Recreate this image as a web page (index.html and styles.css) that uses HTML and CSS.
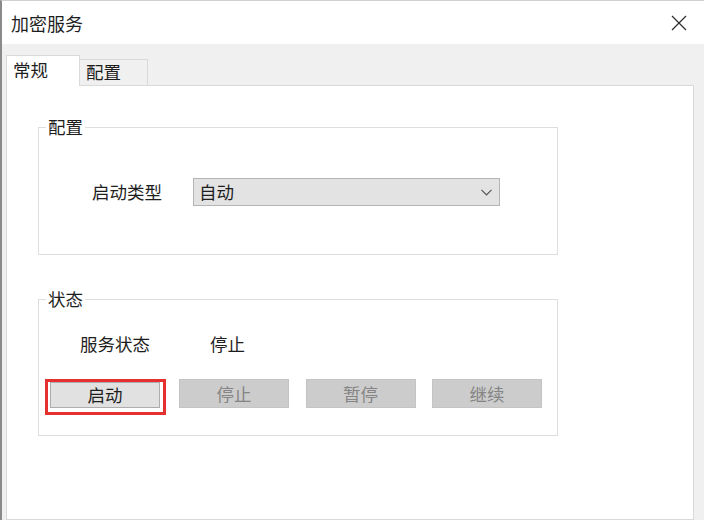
FILE: index.html
```html
<!DOCTYPE html>
<html lang="zh-CN">
<head>
<meta charset="utf-8">
<title>加密服务</title>
<link rel="stylesheet" href="styles.css">
</head>
<body>
<div class="window">
  <div class="titlebar">
    <span class="title">加密服务</span>
    <svg class="close" width="16" height="16" viewBox="0 0 16 16"><path d="M1 1 L15 15 M15 1 L1 15" stroke="#2b2b2b" stroke-width="1.2" fill="none"/></svg>
  </div>
  <div class="client">
    <div class="tabs">
      <div class="tab active">常规</div>
      <div class="tab">配置</div>
    </div>
    <div class="panel">
      <fieldset class="group group-config">
        <legend>配置</legend>
        <div class="row-config">
          <span class="label-start">启动类型</span>
          <div class="combo">
            <span>自动</span>
            <svg class="chev" width="11" height="7" viewBox="0 0 11 7"><path d="M0.5 0.8 L5.5 5.8 L10.5 0.8" stroke="#555" stroke-width="1.2" fill="none"/></svg>
          </div>
        </div>
      </fieldset>
      <fieldset class="group group-status">
        <legend>状态</legend>
        <div class="row-status">
          <span class="label-status">服务状态</span>
          <span>停止</span>
        </div>
        <div class="row-buttons">
          <span class="highlight"><button class="btn btn-start">启动</button></span>
          <button class="btn disabled">停止</button>
          <button class="btn disabled">暂停</button>
          <button class="btn disabled">继续</button>
        </div>
      </fieldset>
    </div>
  </div>
</div>
</body>
</html>
```
FILE: styles.css
```css
html, body {
  margin: 0;
  padding: 0;
  background: #ffffff;
}
body {
  font-family: "Noto Sans CJK SC", "Noto Sans", sans-serif;
  font-size: 17.5px;
  color: #1e1e1e;
}
.window {
  width: 704px;
  height: 520px;
  box-sizing: border-box;
  border-left: 2px solid #8a8a8a;
  border-top: 1px solid #d0d0d0;
  display: flex;
  flex-direction: column;
  overflow: hidden;
}
.titlebar {
  height: 43px;
  flex: none;
  background: #ffffff;
  display: flex;
  align-items: center;
  justify-content: space-between;
  padding: 0 17px 0 9px;
}
.title {
  font-size: 18px;
  line-height: 24px;
}
.close {
  display: block;
}
.client {
  flex: 1;
  background: #f0f0f0;
  padding: 0 10px 0 4px;
  display: flex;
  flex-direction: column;
}
.tabs {
  height: 41px;
  flex: none;
  display: flex;
  align-items: flex-end;
}
.tab {
  box-sizing: border-box;
  height: 26px;
  width: 68px;
  padding-left: 6px;
  line-height: 24px;
  background: #f0f0f0;
  border: 1px solid #d9d9d9;
  border-bottom: none;
  border-left: none;
}
.tab.active {
  width: 74px;
  height: 31px;
  padding-top: 2px;
  background: #ffffff;
  border-left: 1px solid #d9d9d9;
  margin-bottom: -1px;
  position: relative;
  z-index: 1;
}
.panel {
  flex: 1;
  background: #ffffff;
  border: 1px solid #d9d9d9;
  padding: 29px 0 0 31px;
}
.group {
  margin: 0;
  padding: 0;
  width: 520px;
  box-sizing: border-box;
  border: 1px solid #dedede;
  min-width: 0;
}
.group legend {
  margin-left: 7px;
  padding: 0 2px;
  line-height: 24px;
}
.group-config {
  padding-bottom: 48px;
}
.row-config {
  margin-top: 39px;
  padding-left: 53px;
  display: flex;
  align-items: center;
}
.label-start {
  width: 101px;
  line-height: 24px;
}
.combo {
  box-sizing: border-box;
  width: 307px;
  height: 28px;
  background: #e3e3e3;
  border: 1px solid #b5b5b5;
  display: flex;
  align-items: center;
  justify-content: space-between;
  padding: 0 7px 0 5px;
  line-height: 24px;
}
.chev {
  display: block;
}
.group-status {
  margin-top: 32px;
  padding-bottom: 20px;
}
.row-status {
  margin-top: 21px;
  padding-left: 41px;
  display: flex;
  line-height: 24px;
}
.label-status {
  width: 130px;
}
.row-buttons {
  margin-top: 23px;
  padding-left: 6px;
  display: flex;
  align-items: flex-start;
  gap: 16.5px;
}
.highlight {
  display: block;
  border: 3px solid #e4302f;
  padding: 0 3px 4px 2px;
  margin-right: -3.5px;
}
.btn {
  display: block;
  box-sizing: border-box;
  width: 110px;
  height: 29px;
  margin: 0;
  padding: 0;
  font-family: inherit;
  font-size: 17.5px;
  line-height: 24px;
  border: 1px solid #c4c4c4;
  background: #cccccc;
  color: #858585;
}
.btn-start {
  height: 26px;
  background: #e1e1e1;
  border-color: #adadad;
  color: #1e1e1e;
}
```
